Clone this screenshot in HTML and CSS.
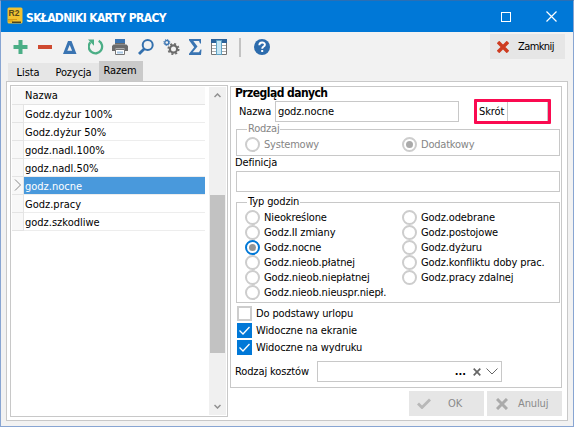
FILE: index.html
```html
<!DOCTYPE html>
<html lang="pl">
<head>
<meta charset="utf-8">
<title>Składniki karty pracy</title>
<link rel="stylesheet" href="styles.css">
</head>
<body>
<div class="window">
  <header class="titlebar">
    <svg class="logo" width="16" height="17" viewBox="0 0 16 17"><rect x="0.5" y="0.5" width="15" height="16" rx="1.5" fill="#f2c230"/><path d="M1 12.5h9M1 14h5" stroke="#d49a14"/><path d="M5 14.5h9v1.5H5zM10 13h4" fill="#4b4320"/><text x="1.6" y="8.6" class="logo-text">R2</text></svg>
    <h1><span class="t w-title">SKŁADNIKI KARTY PRACY</span></h1>
    <svg class="max" width="10" height="10"><rect x="0.5" y="0.5" width="9" height="9" fill="none" stroke="#fff"/></svg>
    <svg class="close" width="11" height="11"><path d="M0.5 0.5l10 10M10.500.5l-10 10" stroke="#fff" stroke-width="1.2"/></svg>
  </header>
  <nav class="toolbar">
    <svg width="16" height="16"><path d="M5.500 1h4v5H14.500v4h-5v5h-4v-5H0.500V6h5z" fill="#4bae86"/></svg>
    <svg width="16" height="16"><path d="M0 6h14v4H0z" fill="#cf4a30"/></svg>
    <svg width="16" height="16"><path fill-rule="evenodd" d="M5 2h3.500L13.500 15H0zM6.700 6L4.300 11.800h4.800z" fill="#3a74b2"/></svg>
    <svg width="17" height="16"><path d="M10.700 1.800A6.700 6.700 0 1 1 2.400 3.200" fill="none" stroke="#4bae86" stroke-width="2.3"/><path d="M0 0.500h6v6.300z" fill="#4bae86"/></svg>
    <svg class="print" width="16" height="16"><path d="M3 0h10v4H3z" fill="#3a74b2"/><path d="M1.500 5.500h13L16 7v5h-3.500V9.500h-9V12H0V7z" fill="#6b6b6b"/><path d="M3 4h10v1.500H3z" fill="#6b6b6b"/><path d="M3.500 10.500h9v5h-9z" fill="#fff" stroke="#777"/><path d="M5 13.500h6" stroke="#a7c7e4" stroke-width="2"/></svg>
    <svg width="16" height="16"><circle cx="9.700" cy="6" r="5" fill="none" stroke="#3370ae" stroke-width="2"/><path d="M6.300 9.700L1 15" stroke="#3370ae" stroke-width="2.800"/></svg>
    <svg width="17" height="16"><circle cx="10.500" cy="10" r="3.600" fill="none" stroke="#6b6b6b" stroke-width="2.200"/><circle cx="10.500" cy="10" r="5.200" fill="none" stroke="#6b6b6b" stroke-width="1.700" stroke-dasharray="2.040 2.040"/><circle cx="3.800" cy="3.500" r="2" fill="none" stroke="#3a74b2" stroke-width="1.300"/><circle cx="3.800" cy="3.500" r="3" fill="none" stroke="#3a74b2" stroke-dasharray="1.180 1.180"/></svg>
    <svg class="sum" width="16" height="16"><path d="M1 0h12v4.500h-1L11 2H5.300l4.200 5.500L4.700 13.300H11l1.500-2.800h1L13 16H1v-1.300l5.200-6.400L1 1.300z" fill="#3a74b2"/></svg>
    <svg class="grid-icon" width="17" height="16"><path d="M0.500 0.500h15v15H0.500z" fill="#fff" stroke="#737373"/><path d="M0 0h16v4H0z" fill="#2d6299"/><path d="M1 6.500h14M1 9.500h14M1 12.500h14" stroke="#aaa"/><path d="M5.500 1.500h5v14h-5z" fill="#c5e6f4" stroke="#5fa2c5"/></svg>
    <i class="divider"></i>
    <svg width="17" height="17"><circle cx="8" cy="8" r="8" fill="#2d6cad"/><path d="M5.300 6.200C5.300 2.600 10.900 2.600 10.900 5.700C10.900 7.700 8.200 7.500 8.200 9.700" fill="none" stroke="#fff" stroke-width="1.900"/><path d="M7.200 11h2v2h-2z" fill="#fff"/></svg>
    <button class="btn btn-close"><svg width="12" height="12"><path d="M1 1l10 10M11 1L1 11" stroke="#ce3c20" stroke-width="3.500"/></svg><span class="t w-close">Zamknij</span></button>
  </nav>
  <div class="tabs"><div class="tab"><span class="t w-lista">Lista</span></div><div class="tab tab-mid"><span class="t w-poz">Pozycja</span></div><div class="tab active"><span class="t w-razem">Razem</span></div></div>
  <main class="page">
    <section class="list">
      <div class="table">
        <div class="row head"><span class="t">Nazwa</span></div>
        <div class="row"><i></i><b><span class="t">Godz.dyżur 100%</span></b></div>
        <div class="row"><i></i><b><span class="t">Godz.dyżur 50%</span></b></div>
        <div class="row"><i></i><b><span class="t">godz.nadl.100%</span></b></div>
        <div class="row"><i></i><b><span class="t">godz.nadl.50%</span></b></div>
        <div class="row selected"><i><svg width="8" height="12"><path d="M1 0.500l5.500 5.500L1 11.500" fill="none" stroke="#888"/></svg></i><b><span class="t">godz.nocne</span></b></div>
        <div class="row"><i></i><b><span class="t">Godz.pracy</span></b></div>
        <div class="row"><i></i><b><span class="t">godz.szkodliwe</span></b></div>
      </div>
      <div class="scroll">
        <svg width="7" height="5"><path d="M0.500 4L3.500 1l3 3" fill="none" stroke="#909090" stroke-width="1.500"/></svg>
        <div class="thumb"></div>
        <svg class="down" width="7" height="5"><path d="M0.500 1l3 3 3-3" fill="none" stroke="#909090" stroke-width="1.500"/></svg>
      </div>
    </section>
    <section class="side">
      <div class="details">
        <h2><span class="t w-head">Przegląd danych</span></h2>
        <div class="name-line"><label class="t">Nazwa</label><div class="field name"><span class="t">godz.nocne</span></div><div class="short"><label class="t">Skrót</label><div class="short-field"></div></div></div>
        <div class="group kind"><span class="legend t">Rodzaj</span>
          <div class="opt"><i class="radio"></i><span class="t">Systemowy</span></div>
          <div class="opt"><i class="radio on"></i><span class="t">Dodatkowy</span></div>
        </div>
        <label class="def t">Definicja</label>
        <div class="field wide"></div>
        <div class="group hours"><span class="legend t">Typ godzin</span>
          <div>
            <div class="opt"><i class="radio"></i><span class="t">Nieokreślone</span></div>
            <div class="opt"><i class="radio"></i><span class="t">Godz.II zmiany</span></div>
            <div class="opt"><i class="radio on focus"></i><span class="t">Godz.nocne</span></div>
            <div class="opt"><i class="radio"></i><span class="t">Godz.nieob.płatnej</span></div>
            <div class="opt"><i class="radio"></i><span class="t">Godz.nieob.niepłatnej</span></div>
            <div class="opt"><i class="radio"></i><span class="t">Godz.nieob.nieuspr.niepł.</span></div>
          </div>
          <div>
            <div class="opt"><i class="radio"></i><span class="t">Godz.odebrane</span></div>
            <div class="opt"><i class="radio"></i><span class="t">Godz.postojowe</span></div>
            <div class="opt"><i class="radio"></i><span class="t">Godz.dyżuru</span></div>
            <div class="opt"><i class="radio"></i><span class="t">Godz.konfliktu doby prac.</span></div>
            <div class="opt"><i class="radio"></i><span class="t">Godz.pracy zdalnej</span></div>
          </div>
        </div>
        <div class="checks">
          <div class="check"><i class="box"></i><span class="t">Do podstawy urlopu</span></div>
          <div class="check"><i class="box ticked"><svg width="15" height="15"><path d="M2.500 7.500l3.500 3.500 6.500-7" fill="none" stroke="#fff" stroke-width="1.300"/></svg></i><span class="t">Widoczne na ekranie</span></div>
          <div class="check"><i class="box ticked"><svg width="15" height="15"><path d="M2.500 7.500l3.500 3.500 6.500-7" fill="none" stroke="#fff" stroke-width="1.300"/></svg></i><span class="t">Widoczne na wydruku</span></div>
        </div>
        <div class="cost-line"><label class="t">Rodzaj kosztów</label><div class="field cost"><span class="dots">...</span><svg width="8" height="8"><path d="M0.700 0.700l6.600 6.600M7.300 0.700L0.700 7.300" stroke="#666" stroke-width="1.700"/></svg><svg width="12" height="7"><path d="M0.500 0.500L6 6l5.500-5.500" fill="none" stroke="#666"/></svg></div></div>
      </div>
      <footer>
        <button class="btn ok"><svg width="14" height="11"><path d="M1 5.500l4 4L13 1.500" fill="none" stroke="#b8b8b8" stroke-width="2.800"/></svg><span class="t">OK</span></button>
        <button class="btn cancel"><svg width="12" height="12"><path d="M1 1l10 10M11 1L1 11" stroke="#aaa" stroke-width="3"/></svg><span class="t">Anuluj</span></button>
      </footer>
    </section>
  </main>
</div>
</body>
</html>
```
FILE: styles.css
```css
* { box-sizing: border-box; }
body { margin: 0; font: 11px/14px "DejaVu Sans Condensed", "DejaVu Sans", sans-serif; font-stretch: condensed; color: #000; }
svg { display: block; flex: none; }
i, b { font-style: normal; font-weight: normal; }
h1, h2 { margin: 0; font-size: 12px; line-height: 14px; }
.t { display: inline-block; white-space: nowrap; letter-spacing: -0.120px; }

.window { width: 574px; height: 427px; border: 1px solid #88a5d2; border-top-color: #2a6fb5; background: #f2f2f2; display: flex; flex-direction: column; }
.titlebar { height: 31px; flex: none; background: #0078d7; color: #fff; display: flex; align-items: center; padding: 0 16px 0 6px; }
.titlebar h1 { margin: 2px auto 0 3px; }
.logo { margin-top: -2px; }
.logo-text { font: bold 8.500px "Liberation Sans", sans-serif; fill: #54491e; }
.max { margin-right: 35px; }
.w-title { letter-spacing: -0.640px; }
.w-head { letter-spacing: -0.560px; }
.w-close { letter-spacing: -0.600px; }

.toolbar { height: 30px; flex: none; display: flex; align-items: center; gap: 9px; padding: 0 8px 0 12px; }
.print { margin-left: -2px; }
.print + svg { margin-left: 1px; }
.sum { margin-left: -1px; }
.grid-icon { margin-left: -2px; }
.divider { width: 2px; height: 19px; margin: 0 4px 0 2px; background: #c3c3c3; }
.btn { border: 0; padding: 0; width: 75px; height: 25px; background: #e6e6e6; font: inherit; color: inherit; display: flex; align-items: center; }
.btn-close { margin: -1px 0 0 auto; padding-left: 7px; gap: 9px; }

.tabs { height: 19px; flex: none; display: flex; align-items: flex-end; padding-left: 7px; }
.tab { height: 18px; width: 39px; background: #e6e6e6; display: flex; align-items: center; justify-content: center; padding: 1px 0 0 1px; }
.tab-mid { width: 52px; }
.tab.active { width: 44px; height: 20px; background: #cacaca; padding: 0 2px 0 0; }

.page { width: 562px; height: 340px; flex: none; margin-left: 5px; border: 1px solid #c8c8c8; background: #fff; display: flex; padding: 3px; }
.list { width: 218px; height: 332px; border: 1px solid #c8c8c8; padding: 1px; display: flex; justify-content: space-between; }
.table { width: 193px; }
.table .t { letter-spacing: 0; }
.row { height: 18px; display: flex; }
.row.head { background: #f8f8f8; border-bottom: 1px solid #e4e4e4; padding: 2px 0 0 13px; }
.row i { width: 12px; background: #f8f8f8; border-right: 1px solid #e4e4e4; border-bottom: 1px solid #e4e4e4; padding: 2px 0 0 2px; }
.row b { flex: 1; border-bottom: 1px solid #ededed; padding: 3px 0 0 1px; }
.row.selected b { background: #4999dc; color: #fff; }
.scroll { width: 17px; background: #f0f0f0; padding: 6px 1px; display: flex; flex-direction: column; align-items: center; }
.thumb { width: 15px; height: 158px; margin-top: 97px; background: #c2c2c2; }
.down { margin-top: auto; }

.side { margin: 1px 0 0 2px; width: 332px; }
.details { width: 332px; height: 302px; border: 1px solid #c8c8c8; padding: 0 1px 0 5px; display: flex; flex-direction: column; }
h2 { height: 14px; margin: -1px 0 1px -1px; }
.name-line { height: 27px; display: flex; align-items: center; margin: -3px 0 0 3px; }
.name-line label { width: 36px; }
.field { border: 1px solid #c8c8c8; background: #fff; height: 21px; }
.name { width: 184px; padding: 3px 0 0 2px; }
.short { width: 77px; height: 25px; margin-left: 15px; border: 3px solid #fa0a50; border-radius: 1px; display: flex; align-items: center; padding-left: 2px; }
.short label { width: 28px; }
.short-field { width: 41px; height: 19px; border: solid #c8c8c8; border-width: 0 1px; }
.group { position: relative; width: 324px; border: 1px solid #c8c8c8; display: flex; }
.legend { position: absolute; left: 10px; top: -8px; background: #fff; padding: 0 1px; }
.kind { height: 27px; margin-top: 4px; color: #858585; padding: 7px 0 0 8px; }
.kind .t { letter-spacing: -0.220px; }
.kind .opt { width: 157px; }
.opt { height: 15px; display: flex; align-items: center; gap: 4px; }
.radio { width: 15px; height: 15px; flex: none; border: 2px solid #cdcdcd; border-radius: 50%; display: grid; place-items: center; background: #fff; }
.radio.on::after { content: ""; width: 7px; height: 7px; border-radius: 50%; background: #aaa; }
.radio.focus { border-color: #0078d7; }
.radio.focus::after { background: #959595; }
.def { margin: 0 0 0 -1px; height: 15px; }
.wide { width: 324px; }
.hours { height: 101px; margin-top: 10px; padding: 7px 0 0 8px; }
.hours > div { width: 157px; }
.checks { display: grid; gap: 2px; margin: 3px 0 0 1px; }
.check { height: 15px; display: flex; align-items: center; gap: 4px; }
.box { width: 15px; height: 15px; border: 2px solid #cdcdcd; }
.ticked { border: 0; background: #0078d7; }
.cost-line { display: flex; align-items: center; margin: 6px 0 0 -1px; }
.cost-line label { width: 82px; }
.cost { width: 185px; display: flex; align-items: center; justify-content: flex-end; padding-right: 3px; gap: 5px; }
.dots { font-weight: bold; margin-right: 2px; }
footer { display: flex; gap: 3px; justify-content: flex-end; margin-top: 3px; color: #8a8a8a; }
.ok { padding-left: 8px; gap: 17px; }
.cancel { padding-left: 9px; gap: 10px; }
```
